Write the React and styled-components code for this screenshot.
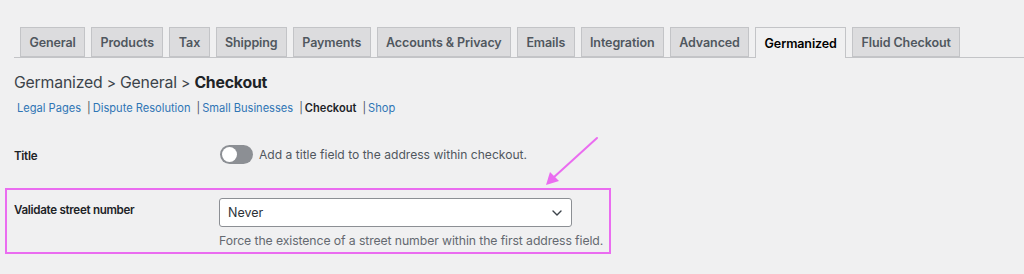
import React from 'react';
import styled, { createGlobalStyle } from 'styled-components';

const GlobalStyle = createGlobalStyle`
  html, body {
    margin: 0;
    padding: 0;
    background: #f0f0f1;
  }
  body {
    font-family: Inter, "Liberation Sans", sans-serif;
    color: #1d2327;
  }
`;

const tabs = [
  'General',
  'Products',
  'Tax',
  'Shipping',
  'Payments',
  'Accounts & Privacy',
  'Emails',
  'Integration',
  'Advanced',
  'Germanized',
  'Fluid Checkout',
];

const sections = [
  { label: 'Legal Pages' },
  { label: 'Dispute Resolution' },
  { label: 'Small Businesses' },
  { label: 'Checkout', current: true },
  { label: 'Shop', last: true },
];

const App = () => {
  return (
    <Page>
      <GlobalStyle />
      <TabBar>
        {tabs.map(t => (
          <Tab key={t} $active={t === 'Germanized'}>{t}</Tab>
        ))}
      </TabBar>

      <Heading>
        Germanized <Crumb>&gt;</Crumb> General <Crumb>&gt;</Crumb> <strong>Checkout</strong>
      </Heading>

      <SubNav>
        {sections.map(s => (
          <SubItem key={s.label}>
            {s.current ? <Current>{s.label}</Current> : <SubLink href="#">{s.label}</SubLink>}
            {!s.last && <Sep>|</Sep>}
          </SubItem>
        ))}
      </SubNav>

      <Form>
        <Row>
          <Label>Title</Label>
          <Field>
            <ToggleLine>
              <Toggle><Knob /></Toggle>
              <Hint>Add a title field to the address within checkout.</Hint>
            </ToggleLine>
          </Field>
        </Row>

        <Highlight>
          <Label>Validate street number</Label>
          <Field>
            <Select>
              <span>Never</span>
              <svg width="10" height="6" viewBox="0 0 10 6" fill="none">
                <path d="M1 1l4 4 4-4" stroke="#3c434a" strokeWidth="1.4" strokeLinecap="round" strokeLinejoin="round" />
              </svg>
            </Select>
            <Description>Force the existence of a street number within the first address field.</Description>
          </Field>
          <Arrow width="60" height="56" viewBox="0 0 60 56">
            <line x1="56" y1="2" x2="12" y2="42" stroke="#ea6cf0" strokeWidth="2" strokeLinecap="round" />
            <polygon points="5,49 9,36 18,45" fill="#ea6cf0" />
          </Arrow>
        </Highlight>
      </Form>
    </Page>
  );
};

const Page = styled.div`
  padding: 27px 0 20px 14px;
  width: 1010px;
`;

const TabBar = styled.nav`
  display: flex;
  gap: 6px;
  padding-left: 6px;
  border-bottom: 1px solid #c3c4c7;
  height: 30px;
`;

const Tab = styled.a`
  box-sizing: border-box;
  height: ${p => (p.$active ? '31px' : '30px')};
  padding: 0 8.4px;
  display: flex;
  align-items: center;
  font-size: 12.5px;
  font-weight: 600;
  letter-spacing: -0.1px;
  color: ${p => (p.$active ? '#000' : '#50575e')};
  background: ${p => (p.$active ? '#f0f0f1' : '#dcdcde')};
  border: 1px solid #c3c4c7;
  border-bottom: ${p => (p.$active ? 'none' : '1px solid #c3c4c7')};
  white-space: nowrap;
`;

const Heading = styled.h2`
  margin: 14px 0 0;
  font-size: 15.8px;
  font-weight: 400;
  line-height: 22px;
  color: #3c434a;
  letter-spacing: -0.2px;

  strong {
    color: #1d2327;
    font-weight: 700;
  }
`;

const Crumb = styled.span`
  font-size: 14px;
`;

const SubNav = styled.ul`
  display: flex;
  list-style: none;
  margin: 6px 0 0;
  padding: 0 0 0 3px;
  font-size: 11.1px;
  line-height: 16px;
`;

const SubItem = styled.li`
  display: flex;
  align-items: center;
`;

const SubLink = styled.a`
  color: #2f75b5;
  text-decoration: none;
`;

const Current = styled.span`
  color: #1d2327;
  font-weight: 600;
`;

const Sep = styled.span`
  color: #50575e;
  margin: 0 2px 0 6px;
`;

const Form = styled.div`
  margin-top: 29px;
`;

const Row = styled.div`
  display: flex;
  align-items: flex-start;
  min-height: 43px;
`;

const Highlight = styled(Row)`
  position: relative;
  box-sizing: border-box;
  width: 606px;
  height: 66px;
  margin-left: -9px;
  padding: 9px 0 0 7px;
  border: 2px solid #ea6cf0;
`;

const Label = styled.div`
  width: 205px;
  flex-shrink: 0;
  font-size: 11.6px;
  font-weight: 600;
  letter-spacing: -0.3px;
  line-height: 18px;
  color: #1d2327;
  padding-top: 2px;
`;

const Field = styled.div`
  display: flex;
  flex-direction: column;
`;

const ToggleLine = styled.div`
  display: flex;
  align-items: center;
  gap: 6px;
  margin-left: 1px;
`;

const Toggle = styled.span`
  box-sizing: border-box;
  width: 33px;
  height: 19px;
  border-radius: 10px;
  background: #8c8f94;
  display: flex;
  align-items: center;
  padding: 0 2px;
`;

const Knob = styled.span`
  width: 15px;
  height: 15px;
  border-radius: 50%;
  background: #fff;
`;

const Hint = styled.span`
  font-size: 12.1px;
  color: #50575e;
`;

const Select = styled.div`
  box-sizing: border-box;
  width: 353px;
  height: 29px;
  margin-top: -1px;
  background: #fff;
  border: 1px solid #8c8f94;
  border-radius: 3px;
  display: flex;
  align-items: center;
  justify-content: space-between;
  padding: 0 9px 0 8px;
  font-size: 12.5px;
  color: #2c3338;
`;

const Description = styled.p`
  margin: 6px 0 0;
  font-size: 12.25px;
  color: #646970;
  letter-spacing: -0.1px;
`;

const Arrow = styled.svg`
  position: absolute;
  right: 8px;
  top: -54px;
`;

export default App;
